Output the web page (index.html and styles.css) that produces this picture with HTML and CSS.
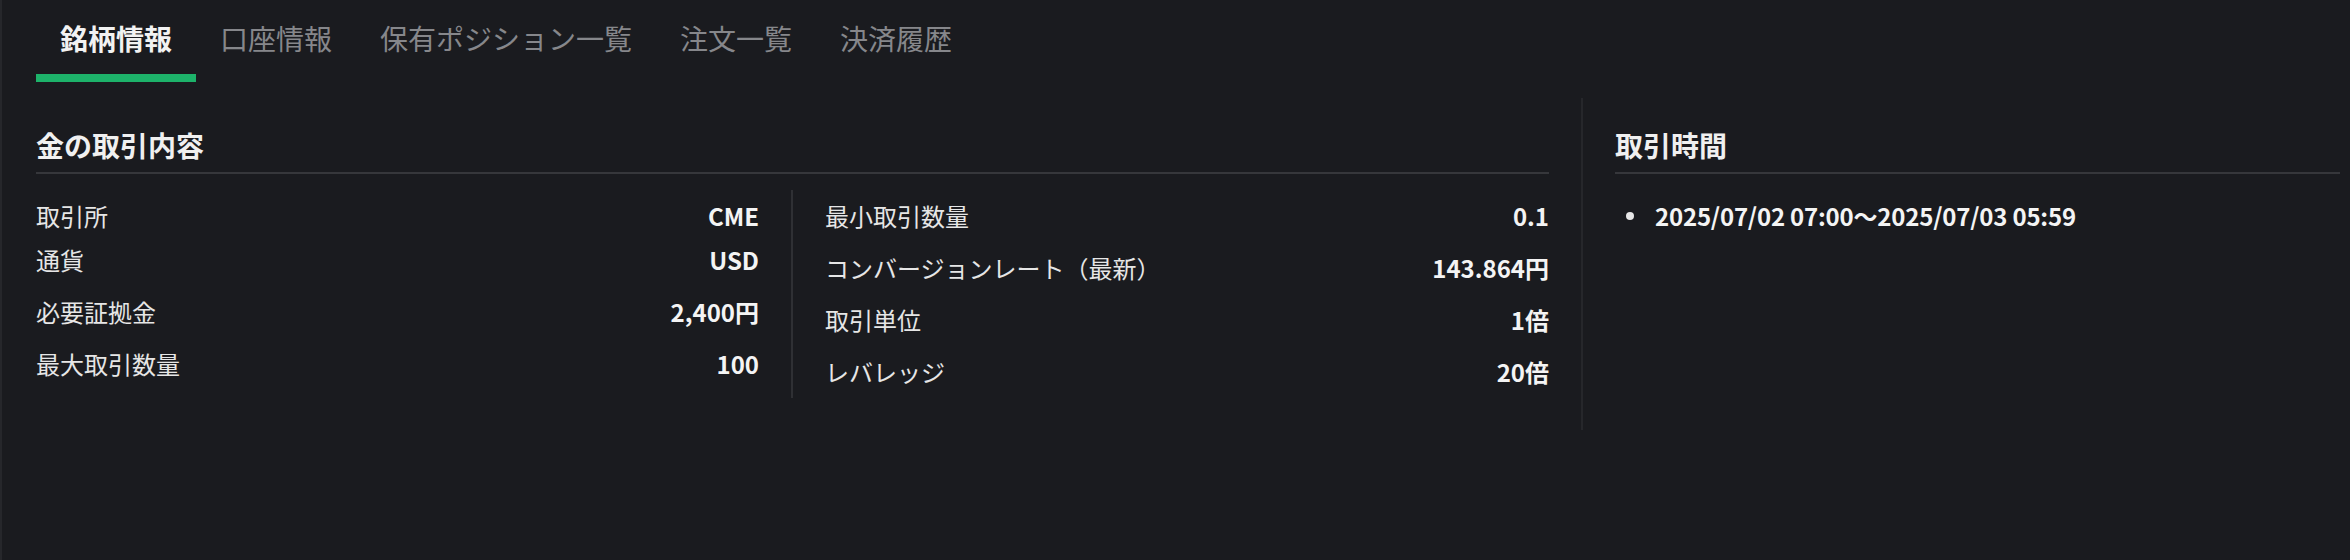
FILE: index.html
```html
<!DOCTYPE html>
<html lang="ja">
<head>
    <meta charset="UTF-8">
    <meta name="viewport" content="width=device-width, initial-scale=1.0">
    <title>銘柄情報</title>
    <link rel="stylesheet" href="styles.css">
</head>
<body>

    <div class="page">
        <!-- タブ -->
        <nav class="tabs">
            <a href="javascript:void(0)" class="tab active">銘柄情報</a>
            <a href="javascript:void(0)" class="tab">口座情報</a>
            <a href="javascript:void(0)" class="tab">保有ポジション一覧</a>
            <a href="javascript:void(0)" class="tab">注文一覧</a>
            <a href="javascript:void(0)" class="tab">決済履歴</a>
        </nav>

        <!-- 銘柄情報 -->
        <main class="info">
            <section class="info-main">
                <h3 class="info-title">金の取引内容</h3>
                <div class="info-columns">
                    <div class="info-col">
                        <div class="info-row compact"><span class="label">取引所</span><span class="value">CME</span></div>
                        <div class="info-row"><span class="label">通貨</span><span class="value">USD</span></div>
                        <div class="info-row"><span class="label">必要証拠金</span><span class="value">2,400円</span></div>
                        <div class="info-row"><span class="label">最大取引数量</span><span class="value">100</span></div>
                    </div>
                    <div class="info-col">
                        <div class="info-row"><span class="label">最小取引数量</span><span class="value">0.1</span></div>
                        <div class="info-row"><span class="label">コンバージョンレート（最新）</span><span class="value">143.864円</span></div>
                        <div class="info-row"><span class="label">取引単位</span><span class="value">1倍</span></div>
                        <div class="info-row"><span class="label">レバレッジ</span><span class="value">20倍</span></div>
                    </div>
                </div>
            </section>

            <aside class="info-side">
                <h3 class="info-title">取引時間</h3>
                <ul class="hours">
                    <li>2025/07/02 07:00〜2025/07/03 05:59</li>
                </ul>
            </aside>
        </main>
    </div>

</body>
</html>
```

FILE: styles.css
```css
/* 全体 */
body {
    font-family: "Noto Sans CJK JP", "Noto Sans", sans-serif;
    margin: 0;
    padding: 0;
    background-color: #1a1b1f;
    color: #ececec;
}

.page {
    min-height: 560px;
    border-left: 2px solid #26272b;
}

/* タブ */
.tabs {
    display: flex;
    padding: 18px 0 0 34px;
}

.tab {
    display: block;
    padding: 0 24px 16px;
    font-size: 28px;
    line-height: 40px;
    color: #86878b;
    text-decoration: none;
    border-bottom: 8px solid transparent;
}

.tab.active {
    color: #f2f2f2;
    font-weight: 700;
    border-bottom-color: #1db36a;
}

/* 銘柄情報 */
.info {
    display: flex;
    margin-top: 16px;
    padding: 0 10px 0 34px;
}

.info-main {
    flex: 1;
    padding: 0 32px 32px 0;
}

.info-side {
    width: 759px;
    box-sizing: border-box;
    border-left: 2px solid #26272b;
    padding-left: 32px;
}

.info-title {
    margin: 0;
    padding: 27px 0 7px;
    font-size: 28px;
    line-height: 40px;
    font-weight: 700;
    color: #f0f0f0;
    border-bottom: 2px solid #36373b;
}

.info-columns {
    display: grid;
    grid-template-columns: 755fr 758fr;
    margin-top: 16px;
}

.info-col {
    padding-right: 32px;
}

.info-col + .info-col {
    padding: 0 0 0 32px;
    border-left: 2px solid #2f3034;
}

.info-row {
    display: flex;
    justify-content: space-between;
    align-items: center;
    padding: 8px 0;
    font-size: 24px;
    line-height: 36px;
}

.info-row.compact {
    padding-bottom: 0;
}

.label {
    color: #e6e6e6;
}

.value {
    font-weight: 700;
    color: #f4f4f4;
}

/* 取引時間 */
.hours {
    list-style: none;
    margin: 16px 0 0;
    padding: 0;
}

.hours li {
    display: flex;
    align-items: center;
    padding: 8px 0;
    font-size: 24px;
    line-height: 36px;
    font-weight: 700;
    color: #f4f4f4;
    letter-spacing: -0.2px;
}

.hours li::before {
    content: "";
    width: 8px;
    height: 8px;
    margin: 0 21px 0 11px;
    border-radius: 50%;
    background-color: #e6e6e6;
}
```
